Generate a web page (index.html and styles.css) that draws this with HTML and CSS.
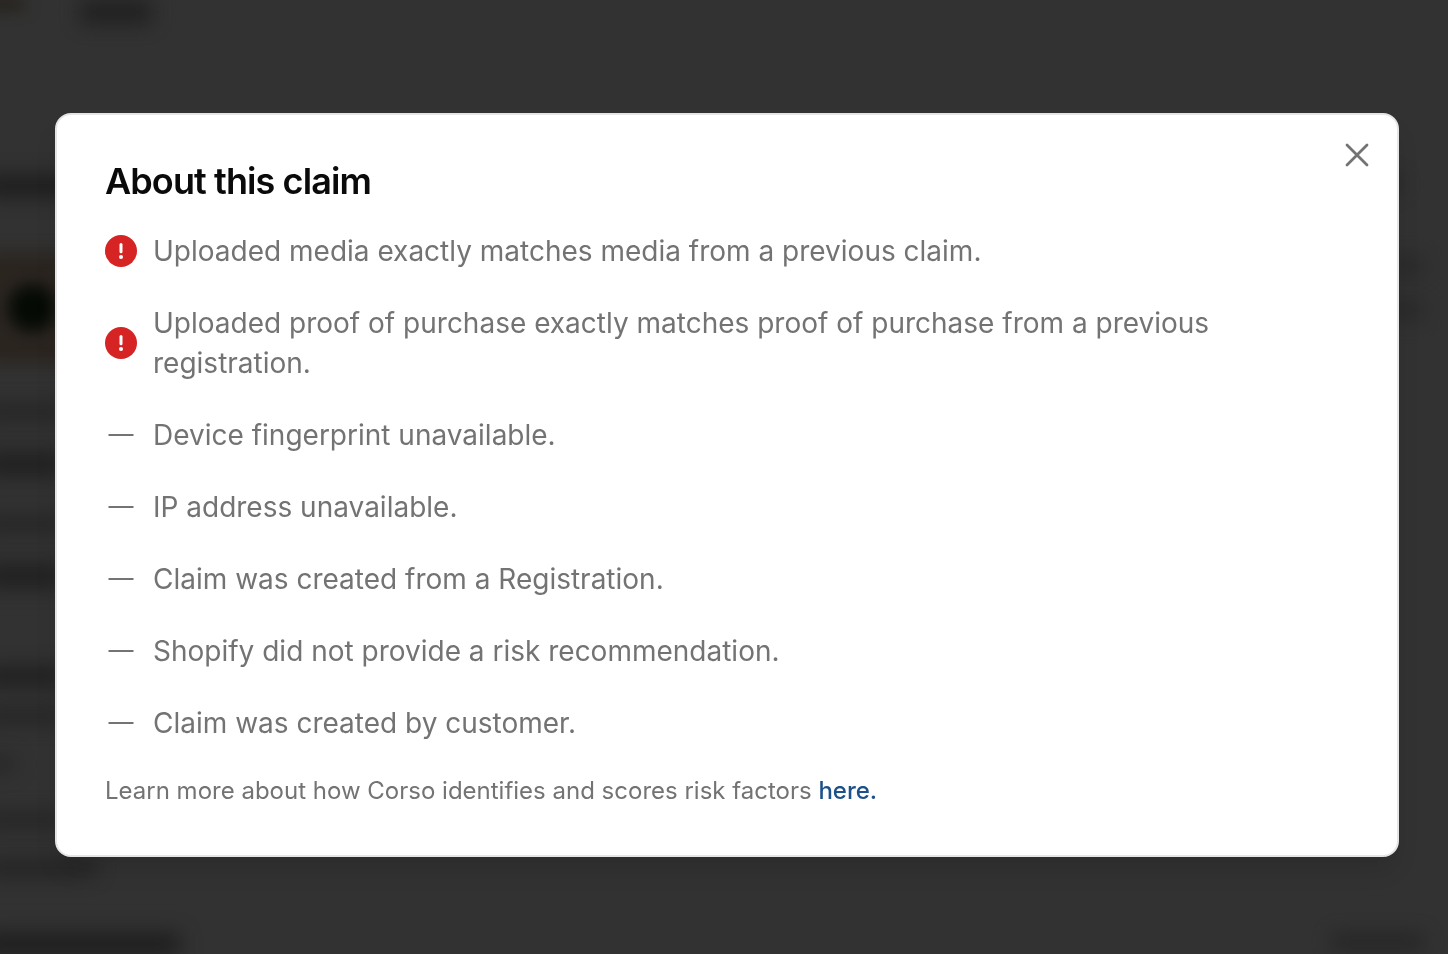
FILE: index.html
```html
<!DOCTYPE html>
<html lang="en">
<head>
<meta charset="utf-8">
<meta name="viewport" content="width=device-width, initial-scale=1">
<title>About this claim</title>
<link rel="stylesheet" href="styles.css">
</head>
<body>
<div class="page" aria-hidden="true">
  <div class="page-top">
    <span class="thumb thumb-small"></span>
    <span class="smudge chip"></span>
  </div>
  <div class="page-body">
    <div class="page-column">
      <span class="smudge heading"></span>
      <span class="thumb"><span class="thumb-subject"></span></span>
      <span class="smudge label"></span>
      <span class="smudge value"></span>
      <span class="smudge label"></span>
      <span class="smudge value"></span>
      <span class="smudge section"></span>
      <span class="smudge label"></span>
      <span class="smudge short"></span>
      <span class="smudge label"></span>
      <span class="smudge wide"></span>
    </div>
    <div class="page-column page-column-end">
      <span class="smudge icon"></span>
      <span class="smudge amount"></span>
      <span class="smudge total"></span>
    </div>
  </div>
  <div class="page-bottom">
    <span class="smudge subtitle"></span>
    <span class="smudge action"></span>
  </div>
</div>
<div class="overlay">
  <div class="dialog" role="dialog" aria-modal="true" aria-labelledby="dialog-title">
    <button class="close" type="button" aria-label="Close">
      <svg viewBox="0 0 32 32" fill="none" stroke="currentColor" stroke-width="2.8" stroke-linecap="round"><path d="M6 6 26 26M26 6 6 26"/></svg>
    </button>
    <h2 class="title" id="dialog-title">About this claim</h2>
    <ul class="factors">
      <li class="factor">
        <svg class="factor-icon" viewBox="0 0 32 32" aria-hidden="true"><circle cx="16" cy="16" r="16" fill="#d62424"/><path d="M16 9.5v7.2" stroke="#fff" stroke-width="3" stroke-linecap="round"/><circle cx="16" cy="22" r="2" fill="#fff"/></svg>
        <span>Uploaded media exactly matches media from a previous claim.</span>
      </li>
      <li class="factor">
        <svg class="factor-icon" viewBox="0 0 32 32" aria-hidden="true"><circle cx="16" cy="16" r="16" fill="#d62424"/><path d="M16 9.5v7.2" stroke="#fff" stroke-width="3" stroke-linecap="round"/><circle cx="16" cy="22" r="2" fill="#fff"/></svg>
        <span>Uploaded proof of purchase exactly matches proof of purchase from a previous registration.</span>
      </li>
      <li class="factor">
        <svg class="factor-icon" viewBox="0 0 32 32" aria-hidden="true"><path d="M3.5 16h25" stroke="currentColor" stroke-width="2"/></svg>
        <span>Device fingerprint unavailable.</span>
      </li>
      <li class="factor">
        <svg class="factor-icon" viewBox="0 0 32 32" aria-hidden="true"><path d="M3.5 16h25" stroke="currentColor" stroke-width="2"/></svg>
        <span>IP address unavailable.</span>
      </li>
      <li class="factor">
        <svg class="factor-icon" viewBox="0 0 32 32" aria-hidden="true"><path d="M3.5 16h25" stroke="currentColor" stroke-width="2"/></svg>
        <span>Claim was created from a Registration.</span>
      </li>
      <li class="factor">
        <svg class="factor-icon" viewBox="0 0 32 32" aria-hidden="true"><path d="M3.5 16h25" stroke="currentColor" stroke-width="2"/></svg>
        <span>Shopify did not provide a risk recommendation.</span>
      </li>
      <li class="factor">
        <svg class="factor-icon" viewBox="0 0 32 32" aria-hidden="true"><path d="M3.5 16h25" stroke="currentColor" stroke-width="2"/></svg>
        <span>Claim was created by customer.</span>
      </li>
    </ul>
    <p class="learn-more">Learn more about how Corso identifies and scores risk factors <a class="link" href="#">here.</a></p>
  </div>
</div>
</body>
</html>
```

FILE: styles.css
```css
*,
*::before,
*::after {
  box-sizing: border-box;
}

body {
  margin: 0;
  background: #323232;
  color: #737373;
  font-family: Inter, "Liberation Sans", sans-serif;
  -webkit-font-smoothing: antialiased;
}

/* Dimmed page behind the dialog */
.page {
  display: flex;
  flex-direction: column;
  justify-content: space-between;
  height: 100vh;
  overflow: hidden;
}

.page-top,
.page-body,
.page-bottom {
  display: flex;
  justify-content: space-between;
  margin-left: -16px;
}

.page-top {
  justify-content: flex-start;
  gap: 56px;
}

.page-body {
  flex: 1;
  padding-top: 152px;
}

.page-column {
  display: flex;
  flex-direction: column;
  gap: 24px;
}

.page-column-end {
  align-items: flex-end;
  padding-right: 24px;
}

.page-bottom {
  padding-right: 24px;
}

.smudge {
  display: block;
  flex: none;
  height: 16px;
  background: #1c1c1c;
  filter: blur(10px);
}

.chip { width: 72px; height: 24px; opacity: 0.8; }
.heading { width: 100px; height: 20px; margin-bottom: 32px; }
.label { width: 80px; margin-bottom: 8px; opacity: 0.6; }
.value { width: 80px; height: 24px; margin-bottom: 16px; opacity: 0.8; }
.section { width: 80px; margin-top: 40px; }
.short { width: 32px; margin-bottom: 16px; opacity: 0.5; }
.wide { width: 112px; opacity: 0.7; }
.icon { width: 24px; margin-right: 24px; opacity: 0.6; }
.amount { width: 32px; height: 20px; margin-top: 40px; opacity: 0.4; }
.total { width: 36px; height: 20px; opacity: 0.4; }
.subtitle { width: 196px; height: 20px; }
.action { width: 92px; opacity: 0.6; }

.thumb {
  display: flex;
  flex: none;
  align-items: center;
  width: 96px;
  height: 112px;
  margin-bottom: 16px;
  padding-left: 24px;
  background: #2b2520;
  filter: blur(8px);
}

.thumb-small {
  width: 40px;
  height: 8px;
  margin-bottom: 0;
  background: #1e170c;
}

.thumb-subject {
  width: 48px;
  height: 48px;
  border-radius: 50%;
  background: #050a05;
}

/* Dialog */
.overlay {
  position: fixed;
  inset: 0;
  display: flex;
  align-items: center;
  justify-content: center;
  padding: 16px 49px 0 55px;
}

.dialog {
  position: relative;
  display: flex;
  flex-direction: column;
  gap: 32px;
  width: 100%;
  max-width: 1344px;
  padding: 48px;
  border: 2px solid #e5e5e5;
  border-radius: 16px;
  background: #fff;
  box-shadow: 0 16px 24px -4px rgba(0, 0, 0, 0.12);
}

.close {
  position: absolute;
  top: 24px;
  right: 24px;
  width: 32px;
  height: 32px;
  padding: 0;
  border: 0;
  background: none;
  color: #737373;
  cursor: pointer;
}

.close svg {
  display: block;
}

.title {
  margin: 0;
  color: #0a0a0a;
  font-size: 36px;
  font-weight: 600;
  line-height: 36px;
  letter-spacing: -0.025em;
}

.factors {
  display: flex;
  flex-direction: column;
  gap: 32px;
  margin: 0;
  padding: 0;
  list-style: none;
  font-size: 28px;
  line-height: 40px;
}

.factor {
  display: flex;
  align-items: center;
  gap: 16px;
}

.factor-icon {
  flex: none;
  width: 32px;
  height: 32px;
}

.learn-more {
  margin: 0;
  font-size: 24px;
  line-height: 32px;
}

.link {
  color: #1c5189;
  font-weight: 500;
  text-decoration: none;
}
```
